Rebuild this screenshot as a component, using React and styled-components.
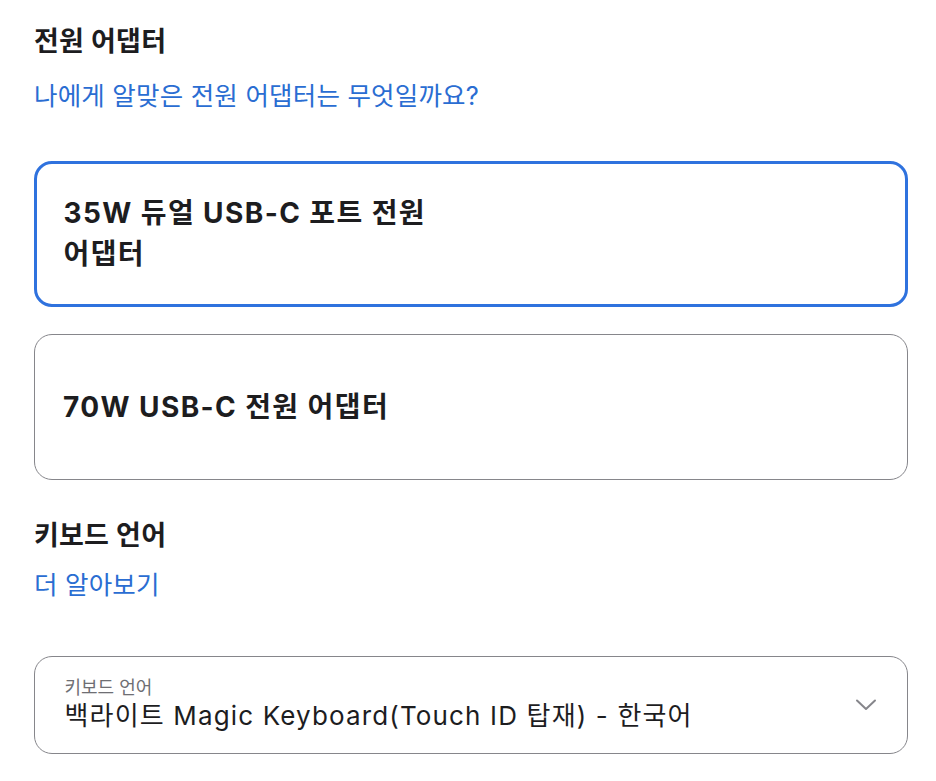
import React from 'react';
import styled, { createGlobalStyle } from 'styled-components';

const colors = {
  text: '#1d1d1f',
  link: '#2a6dd2',
  selected: '#2f72de',
  border: '#86868b',
  muted: '#6e6e73',
};

const GlobalStyle = createGlobalStyle`
  body {
    margin: 0;
    background: #fff;
    font-family: Inter, "Noto Sans CJK KR", sans-serif;
    color: ${colors.text};
  }
`;

const Page = styled.div`
  padding: 25px 28px 0 34px;
  display: flex;
  flex-direction: column;
`;

const Section = styled.section`
  display: flex;
  flex-direction: column;
  margin-top: ${({ first }) => (first ? '0' : '39px')};
`;

const Title = styled.h2`
  margin: 0;
  font-size: 27px;
  line-height: 34px;
  font-weight: 600;
  letter-spacing: 0.2px;
`;

const HelpLink = styled.a`
  margin-top: ${({ gap }) => gap}px;
  font-size: 25.5px;
  line-height: 32px;
  letter-spacing: 0.2px;
  color: ${colors.link};
  text-decoration: none;
  align-self: flex-start;
`;

const Options = styled.div`
  display: flex;
  flex-direction: column;
  gap: 27px;
  margin-top: 49px;
`;

const Option = styled.div`
  box-sizing: border-box;
  min-height: 146px;
  display: flex;
  align-items: center;
  padding: 0 28px;
  border-radius: 18px;
  border: ${({ selected }) => (selected ? `3px solid ${colors.selected}` : `1.5px solid ${colors.border}`)};
  padding-left: ${({ selected }) => (selected ? '26.5px' : '28px')};
`;

const OptionName = styled.span`
  max-width: 410px;
  font-size: 28px;
  line-height: 41px;
  font-weight: 700;
  letter-spacing: 1.4px;
  word-break: keep-all;
`;

const SelectBox = styled.div`
  box-sizing: border-box;
  height: 98px;
  margin-top: 55px;
  border: 1.5px solid ${colors.border};
  border-radius: 18px;
  display: flex;
  align-items: center;
  justify-content: space-between;
  padding: 0 30px 0 29.5px;
`;

const SelectText = styled.div`
  display: flex;
  flex-direction: column;
`;

const SelectLabel = styled.span`
  font-size: 18px;
  line-height: 22px;
  color: ${colors.muted};
`;

const SelectValue = styled.span`
  font-size: 26px;
  line-height: 34px;
  letter-spacing: 1.15px;
`;

const Chevron = () => (
  <svg width="22" height="14" viewBox="0 0 22 14" fill="none">
    <path d="M2 2.5 L11 11 L20 2.5" stroke={colors.border} strokeWidth="2" strokeLinecap="round" strokeLinejoin="round" />
  </svg>
);

const adapters = [
  { id: '35w', name: '35W 듀얼 USB-C 포트 전원 어댑터', selected: true },
  { id: '70w', name: '70W USB-C 전원 어댑터', selected: false },
];

export default function App() {
  return (
    <Page>
      <GlobalStyle />
      <Section first>
        <Title>전원 어댑터</Title>
        <HelpLink href="#" gap={21}>나에게 알맞은 전원 어댑터는 무엇일까요?</HelpLink>
        <Options>
          {adapters.map((a) => (
            <Option key={a.id} selected={a.selected}>
              <OptionName>{a.name}</OptionName>
            </Option>
          ))}
        </Options>
      </Section>
      <Section>
        <Title>키보드 언어</Title>
        <HelpLink href="#" gap={16}>더 알아보기</HelpLink>
        <SelectBox>
          <SelectText>
            <SelectLabel>키보드 언어</SelectLabel>
            <SelectValue>백라이트 Magic Keyboard(Touch ID 탑재) - 한국어</SelectValue>
          </SelectText>
          <Chevron />
        </SelectBox>
      </Section>
    </Page>
  );
}
